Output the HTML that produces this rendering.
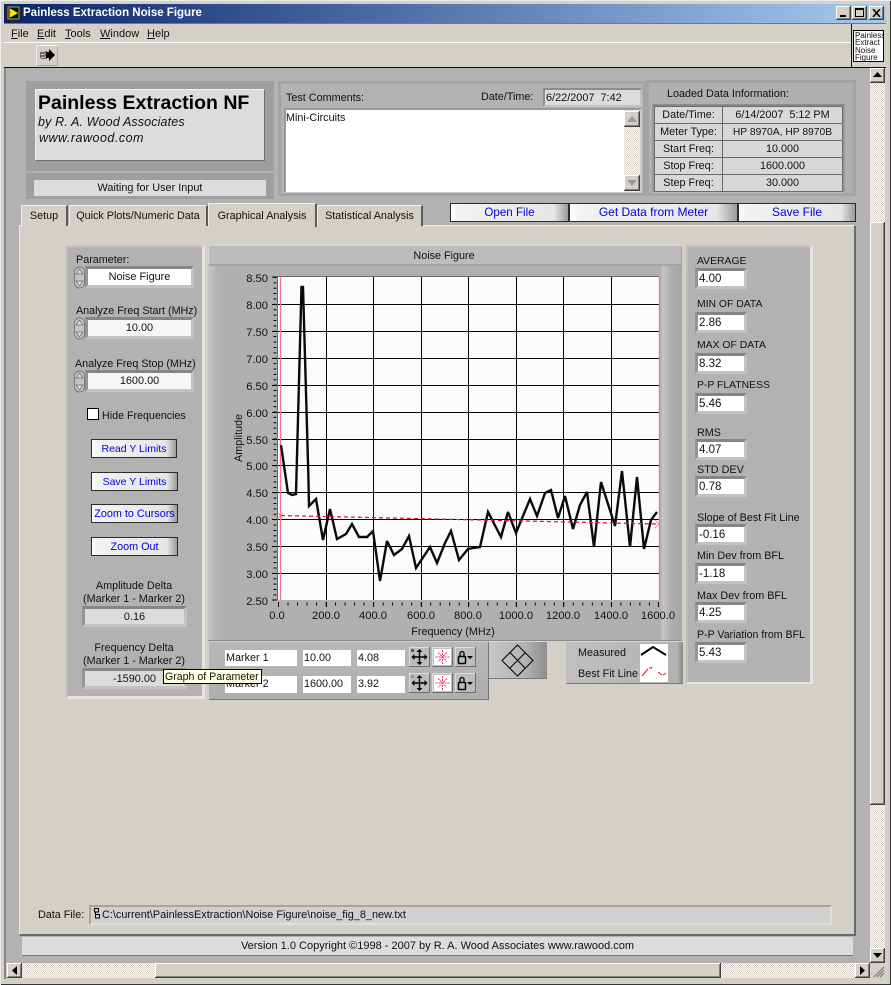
<!DOCTYPE html>
<html><head><meta charset="utf-8"><title>Painless Extraction Noise Figure</title>
<style>
html,body{margin:0;padding:0;width:891px;height:985px;overflow:hidden;background:#d4d0c8}
div,span{position:absolute;box-sizing:border-box}
u{position:static}
body,div{font:11px/14px "Liberation Sans",sans-serif;color:#111}
.t{white-space:nowrap;height:14px;line-height:14px;margin-top:1px}
.c{text-align:center}
.b{background:#d4d0c8;box-shadow:inset -1px -1px #404040,inset 1px 1px #fff,inset -2px -2px #808080}
.d{background:repeating-conic-gradient(#fff 0 25%,#d4d0c8 0 50%) 0 0/2px 2px}
.g{background:#b2b2b2}
.rs{border:3px solid;border-color:#a4a4a4;background:#b2b2b2}
.lo{background:#b2b2b2;border:3px solid;border-color:#e6e3dc;border-top-color:#c8c5bd;border-left-color:#c0bdb5}
.f{border:3px solid;border-color:#858585 #c2c2c2 #c2c2c2 #949494;text-align:center;line-height:11px;background:#fff;background-clip:padding-box}
.fl{text-align:left;padding-left:1px;font-size:11.5px;line-height:16px}
.bb{color:#0000e0;text-align:center;border:1px solid #2c2c2c;background:linear-gradient(90deg,#fff 0,#f2f2f2 6%,#e6e6e6 88%,#9a9a9a 100%);white-space:nowrap}
.tab{background:#d4d0c8;border-top:1px solid #eee;border-left:1px solid #eee;border-right:2px solid #5a5a5a;text-align:center;line-height:20px;white-space:nowrap;font-size:10.8px}
.m{background:#fff;text-align:left;padding-left:1px;line-height:17px;white-space:nowrap;font-size:10.8px}
.mb{background:#bdbdbd;box-shadow:inset -1px -1px #6e6e6e,inset 1px 1px #dedede}
.cell{background:#d8d8d8;border:1px solid #6a6a6a;text-align:center;line-height:17px;white-space:nowrap;font-size:10.8px}
</style></head><body>

<!-- window chrome -->
<div style="left:0;top:0;width:891px;height:985px;background:#d4d0c8;box-shadow:inset 1px 1px #eee,inset -1px -1px #333"></div>
<div style="left:4px;top:4px;width:882px;height:19px;background:linear-gradient(90deg,#0a246a,#a6caf0)"></div>
<div class="t" style="left:23px;top:5px;font-weight:bold;font-size:11.5px;color:#fff">Painless Extraction Noise Figure</div>
<svg style="position:absolute;left:6px;top:5px" width="15" height="16"><rect width="15" height="16" fill="#222"/><rect x="2" y="2" width="11" height="12" fill="#111" stroke="#999"/><path d="M4 4l7 4-7 4z" fill="#ee0" stroke="#ee0"/><path d="M1 7h4" stroke="#e22"/></svg>
<div class="b" style="left:836px;top:6px;width:15px;height:14px"><div style="left:4px;top:9px;width:6px;height:2px;background:#000"></div></div>
<div class="b" style="left:852px;top:6px;width:15px;height:14px"><div style="left:3px;top:2px;width:9px;height:9px;border:1px solid #000;border-top-width:2px"></div></div>
<div class="b" style="left:869px;top:6px;width:15px;height:14px"><svg style="position:absolute;left:3px;top:3px" width="9" height="8"><path d="M1 0l7 8M8 0l-7 8" stroke="#000" stroke-width="1.6"/></svg></div>

<div style="left:4px;top:23px;width:882px;height:1px;background:#777"></div>
<div class="t" style="left:11px;top:26px"><u>F</u>ile</div>
<div class="t" style="left:37px;top:26px"><u>E</u>dit</div>
<div class="t" style="left:65px;top:26px"><u>T</u>ools</div>
<div class="t" style="left:100px;top:26px"><u>W</u>indow</div>
<div class="t" style="left:147px;top:26px"><u>H</u>elp</div>
<div style="left:4px;top:42px;width:847px;height:1px;background:#fff"></div>
<div style="left:36px;top:45px;width:22px;height:21px;background:#d4d0c8;box-shadow:inset 1px 1px #eee,inset -1px -1px #aaa"></div>
<svg style="position:absolute;left:39px;top:48px" width="17" height="15"><path d="M1 5h1M1 7h1M1 9h1M3 4v7M5 4v7M7 3v9" stroke="#000" stroke-dasharray="2 1"/><path d="M7 4h3V1l6 6-6 6v-3H7z" fill="#000"/></svg>
<div style="left:851px;top:24px;width:1px;height:44px;background:#111"></div>
<div style="left:853px;top:30px;width:31px;height:32px;background:#fff;border:1px solid #000;font-size:8px;line-height:7.3px;padding:1px 0 0 1px;white-space:pre;overflow:hidden">Painless
Extract
Noise
Figure</div>
<div style="left:4px;top:67px;width:882px;height:1px;background:#111"></div>

<!-- panel background -->
<div class="g" style="left:6px;top:68px;width:864px;height:895px"></div>
<div style="left:4px;top:68px;width:2px;height:911px;background:#858585"></div>

<!-- vertical scrollbar -->
<div class="d" style="left:870px;top:68px;width:15px;height:895px"></div>
<div class="b" style="left:870px;top:68px;width:15px;height:15px"><svg style="position:absolute;left:3px;top:4px" width="9" height="6"><path d="M4.5 0L9 5H0z" fill="#000"/></svg></div>
<div class="b" style="left:870px;top:222px;width:15px;height:583px"></div>
<div class="b" style="left:870px;top:948px;width:15px;height:15px"><svg style="position:absolute;left:3px;top:5px" width="9" height="6"><path d="M4.5 5L9 0H0z" fill="#000"/></svg></div>
<!-- horizontal scrollbar -->
<div class="d" style="left:7px;top:963px;width:863px;height:15px"></div>
<div class="b" style="left:7px;top:963px;width:15px;height:15px"><svg style="position:absolute;left:5px;top:3px" width="6" height="9"><path d="M0 4.5L5 0V9z" fill="#000"/></svg></div>
<div class="b" style="left:155px;top:963px;width:566px;height:15px"></div>
<div class="b" style="left:855px;top:963px;width:15px;height:15px"><svg style="position:absolute;left:5px;top:3px" width="6" height="9"><path d="M5 4.5L0 0V9z" fill="#000"/></svg></div>
<svg style="position:absolute;left:873px;top:966px" width="12" height="12"><path d="M11 1L1 11M11 4L4 11M11 7L7 11" stroke="#777" stroke-width="1.2"/></svg>

<!-- title block -->
<div class="rs" style="left:26px;top:81px;width:248px;height:90px;border-width:9px 9px 10px 9px;border-color:#9e9e9e"></div>
<div style="left:35px;top:89px;width:230px;height:72px;background:#dcdcdc;border:1px solid;border-color:#f0f0f0 #6e6e6e #6e6e6e #f0f0f0"></div>
<div class="t" style="left:38px;top:91px;height:22px;line-height:22px;font-weight:bold;font-size:19.5px;color:#000">Painless Extraction NF</div>
<div class="t" style="left:38px;top:114px;font-style:italic;font-size:12.5px;letter-spacing:.13px">by R. A. Wood Associates</div>
<div class="t" style="left:39px;top:130px;font-style:italic;font-size:12.5px;letter-spacing:.5px">www.rawood.com</div>
<div class="rs" style="left:26px;top:173px;width:248px;height:26px;border-width:7px 8px 3px 8px;border-color:#9e9e9e"></div>
<div style="left:34px;top:180px;width:232px;height:16px;background:#dcdcdc"></div>
<div class="t c" style="left:34px;top:180px;width:232px;font-size:10.9px">Waiting for User Input</div>

<!-- comments -->
<div class="rs" style="left:278px;top:81px;width:368px;height:115px"></div>
<div class="t" style="left:286px;top:90px;font-size:10.8px">Test Comments:</div>
<div class="t" style="left:481px;top:89px;font-size:10.8px">Date/Time:</div>
<div style="left:543px;top:88px;width:99px;height:19px;background:#dcdcdc;border:2px solid;border-color:#8c8c8c #c2c2c2 #c2c2c2 #8c8c8c;line-height:17px;padding-left:1px;font-size:10.9px;white-space:pre">6/22/2007  7:42</div>
<div style="left:284px;top:108px;width:358px;height:85px;border:2px solid;border-color:#9a9a9a #ccc #ccc #9a9a9a"></div>
<div style="left:286px;top:110px;width:354px;height:82px;background:#fff"></div>
<div class="t" style="left:286px;top:110px;font-size:10.8px">Mini-Circuits</div>
<div class="d" style="left:624px;top:110px;width:16px;height:82px"></div>
<div class="b" style="left:624px;top:111px;width:16px;height:16px"><svg style="position:absolute;left:3px;top:5px" width="10" height="6"><path d="M5 0l5 6H0z" fill="#999"/></svg></div>
<div class="b" style="left:624px;top:175px;width:16px;height:16px"><svg style="position:absolute;left:3px;top:5px" width="10" height="6"><path d="M5 6l5-6H0z" fill="#999"/></svg></div>

<!-- loaded data -->
<div style="left:646px;top:80px;width:210px;height:116px;background:#b0b0b0;border:3px solid #a4a4a4"></div>
<div class="t" style="left:667px;top:86px;font-size:10.8px">Loaded Data Information:</div>
<div style="left:652px;top:104px;width:193px;height:89px;border:2px solid;border-color:#8a8a8a #9a9a9a #bebebe #9a9a9a"></div>
<div class="cell" style="left:654px;top:106px;width:69px;height:18px">Date/Time:</div>
<div class="cell" style="left:722px;top:106px;width:121px;height:18px;white-space:pre">6/14/2007  5:12 PM</div>
<div class="cell" style="left:654px;top:123px;width:69px;height:18px">Meter Type:</div>
<div class="cell" style="left:722px;top:123px;width:121px;height:18px;font-size:10.3px">HP 8970A, HP 8970B</div>
<div class="cell" style="left:654px;top:140px;width:69px;height:18px">Start Freq:</div>
<div class="cell" style="left:722px;top:140px;width:121px;height:18px">10.000</div>
<div class="cell" style="left:654px;top:157px;width:69px;height:18px">Stop Freq:</div>
<div class="cell" style="left:722px;top:157px;width:121px;height:18px">1600.000</div>
<div class="cell" style="left:654px;top:174px;width:69px;height:18px">Step Freq:</div>
<div class="cell" style="left:722px;top:174px;width:121px;height:18px">30.000</div>

<!-- tab panel -->
<div style="left:19px;top:225px;width:837px;height:711px;background:#d4d0c8;border-top:1px solid #eeeae2;border-left:1px solid #eeeae2;border-right:2px solid #6a6a6a;border-bottom:2px solid #6a6a6a"></div>
<div class="tab" style="left:21px;top:205px;width:47px;height:21px">Setup</div>
<div class="tab" style="left:69px;top:205px;width:139px;height:21px">Quick Plots/Numeric Data</div>
<div class="tab" style="left:317px;top:205px;width:106px;height:21px">Statistical Analysis</div>
<div class="tab" style="left:208px;top:203px;width:109px;height:24px;line-height:24px">Graphical Analysis</div>

<div class="bb" style="left:450px;top:203px;width:119px;height:19px;line-height:17px;font-size:11.6px">Open File</div>
<div class="bb" style="left:569px;top:203px;width:169px;height:19px;line-height:17px;font-size:12px">Get Data from Meter</div>
<div class="bb" style="left:738px;top:203px;width:118px;height:19px;line-height:17px;font-size:12px">Save File</div>

<!-- left control panel -->
<div class="lo" style="left:66px;top:245px;width:139px;height:454px;border-width:2px 3px 3px 2px"></div>
<div class="t" style="left:76px;top:252px;font-size:10.8px">Parameter:</div>
<div class="t" style="left:76px;top:303px;font-size:10.75px">Analyze Freq Start (MHz)</div>
<div class="t" style="left:75px;top:356px;font-size:10.75px">Analyze Freq Stop (MHz)</div>
<div class="f" style="left:85px;top:266px;width:109px;height:22px;line-height:17px;font-size:10.9px">Noise Figure</div>
<div class="f" style="left:85px;top:317px;width:109px;height:22px;line-height:17px;background-color:#f6f6f6;font-size:10.9px">10.00</div>
<div class="f" style="left:85px;top:370px;width:109px;height:22px;line-height:17px;background-color:#f6f6f6;font-size:10.9px">1600.00</div>
<svg style="position:absolute;left:74px;top:266px" width="12" height="128"><g fill="#c4c4c4" stroke="#777"><rect x=".5" y="1" width="10" height="21" rx="5"/><rect x=".5" y="52" width="10" height="21" rx="5"/><rect x=".5" y="105" width="10" height="21" rx="5"/></g><path d="M2 8l3.500-5 3.500 5zM2 15l3.500 5 3.500-5zM2 59l3.500-5 3.500 5zM2 66l3.500 5 3.500-5zM2 112l3.500-5 3.500 5zM2 119l3.500 5 3.500-5z" fill="#dcdcdc" stroke="#666" stroke-width=".7"/></svg>
<div style="left:87px;top:408px;width:12px;height:12px;background:#fff;border:1px solid #000"></div>
<div class="t" style="left:102px;top:408px;font-size:10.7px">Hide Frequencies</div>
<div class="bb" style="left:91px;top:439px;width:86px;height:19px;line-height:18px;font-size:10.5px">Read Y Limits</div>
<div class="bb" style="left:91px;top:472px;width:87px;height:19px;line-height:18px;font-size:10.5px">Save Y Limits</div>
<div class="bb" style="left:91px;top:504px;width:87px;height:19px;line-height:18px;font-size:10.8px">Zoom to Cursors</div>
<div class="bb" style="left:91px;top:537px;width:87px;height:19px;line-height:18px;font-size:10.8px">Zoom Out</div>
<div class="t c" style="left:66px;top:578px;width:136px;font-size:10.8px">Amplitude Delta</div>
<div class="t c" style="left:66px;top:591px;width:136px;font-size:10.8px">(Marker 1 - Marker 2)</div>
<div class="f" style="left:82px;top:606px;width:105px;height:21px;line-height:16px;background-color:#dcdcdc;font-size:10.9px">0.16</div>
<div class="t c" style="left:66px;top:640px;width:136px;font-size:10.8px">Frequency Delta</div>
<div class="t c" style="left:66px;top:653px;width:136px;font-size:10.8px">(Marker 1 - Marker 2)</div>
<div class="f" style="left:82px;top:668px;width:105px;height:21px;line-height:16px;background-color:#dcdcdc;font-size:10.9px">-1590.00</div>

<!-- graph -->
<div style="left:208px;top:245px;width:474px;height:20px;background:#bcbcbc;box-shadow:inset 1px 1px #d8d8d8,inset -1px -1px #a0a0a0"></div>
<div class="t c" style="left:208px;top:248px;width:472px;font-size:10.8px">Noise Figure</div>
<div style="left:208px;top:265px;width:474px;height:376px;background:linear-gradient(90deg,#c8c8c8 0,#b0b0b0 10px,#b0b0b0 452px,#c6c6c6 455px,#b0b0b0 462px,#a6a6a6 474px);border-bottom:1px solid #8a8a8a"></div>
<div style="left:208px;top:265px;width:474px;height:1px;background:#a8a8a8"></div>
<svg style="position:absolute;left:0;top:0" width="891" height="985">
<rect x="278" y="277" width="381" height="323" fill="#fbfbfb"/>
<path d="M277.500 277V600M277 276.500H659" stroke="#6a6a6a"/>
<path d="M326.500 277V600M373.500 277V600M421.500 277V600M468.500 277V600M516.500 277V600M563.500 277V600M611.500 277V600M278 304.500H659M278 331.500H659M278 358.500H659M278 385.500H659M278 412.500H659M278 439.500H659M278 465.500H659M278 492.500H659M278 519.500H659M278 546.500H659M278 573.500H659" stroke="#000" stroke-width="1" fill="none"/>
<path d="M272 277H277M272 304.500H277M272 331.500H277M272 358.500H277M272 385.500H277M272 412.500H277M272 439.500H277M272 465.500H277M272 492.500H277M272 519.500H277M272 546.500H277M272 573.500H277M272 600H277" stroke="#000"/>
<line x1="275" y1="277" x2="275" y2="600" stroke="#000" stroke-width="3" stroke-dasharray="1 4.380"/>
<path d="M278.500 602V607M326.500 602V607M373.500 602V607M421.500 602V607M468.500 602V607M516.500 602V607M563.500 602V607M611.500 602V607M658.500 602V607" stroke="#000"/>
<line x1="278" y1="604" x2="659" y2="604" stroke="#000" stroke-width="3" stroke-dasharray="1 8.510"/>
<path d="M280.500 277V600" stroke="#ff6f8f" stroke-width="1.300"/>
<path d="M659.500 277V600" stroke="#ff6f8f" stroke-width="1.300"/>
<path d="M281 515.500L657 524" stroke="#3a9a50" stroke-width="1" stroke-dasharray="2 5"/>
<polyline fill="none" stroke="#0a0a0a" stroke-width="2.400" stroke-linejoin="miter" stroke-miterlimit="3" points="281,445 288,493 292,495 296,494 301.500,287 303,287 308.300,473 309,506 316,499 323,540 330,509 337,539 346,534 352,524 359,537 367,537 373,531 380,581 387,541 394,555 402,549 409,536 416,568 430,547 437,563 445,543 451,531 459,560 468,549 473,548 480,547 488,512 501,537 508,512 516,533 530,499 537,516 545,493 551,490 558,518 565,496 573,529 580,505 587,492 594,547 601,482 615,526 622,471 630,547 637,477 644,549 651,520 657,512"/>
<path d="M281 515.500L657 524" stroke="#ee1133" stroke-width="1.200" stroke-dasharray="4 3" fill="none"/>
<g stroke="#ff6f8f" stroke-width=".8"><path d="M278 513l5 5M283 513l-5 5M655 520l4 4-4 4"  fill="none"/></g>
<g font-family="Liberation Sans,sans-serif" font-size="11.200" fill="#111" text-anchor="end">
<text x="268" y="282">8.50</text><text x="268" y="309">8.00</text><text x="268" y="336">7.50</text><text x="268" y="363">7.00</text><text x="268" y="390">6.50</text><text x="268" y="417">6.00</text><text x="268" y="444">5.50</text><text x="268" y="470">5.00</text><text x="268" y="497">4.50</text><text x="268" y="524">4.00</text><text x="268" y="551">3.50</text><text x="268" y="578">3.00</text><text x="268" y="605">2.50</text>
</g>
<g font-family="Liberation Sans,sans-serif" font-size="11.200" fill="#111" text-anchor="middle">
<text x="277" y="619">0.0</text><text x="326" y="619">200.0</text><text x="373" y="619">400.0</text><text x="421" y="619">600.0</text><text x="468" y="619">800.0</text><text x="516" y="619">1000.0</text><text x="563" y="619">1200.0</text><text x="611" y="619">1400.0</text><text x="658" y="619">1600.0</text>
<text x="453" y="635" font-size="10.800">Frequency (MHz)</text>
<text transform="translate(242,438) rotate(-90)" font-size="10.800">Amplitude</text>
</g>
</svg>

<!-- marker panel -->
<div style="left:208px;top:641px;width:281px;height:59px;background:linear-gradient(#b8b8b8,#aeaeae);box-shadow:inset 1px 1px #d0d0d0,inset -1px -1px #777"></div>
<div class="m" style="left:225px;top:650px;width:72px;height:16px">Marker 1</div>
<div class="m" style="left:303px;top:650px;width:48px;height:16px">10.00</div>
<div class="m" style="left:357px;top:650px;width:48px;height:16px">4.08</div>
<div class="m" style="left:225px;top:676px;width:72px;height:17px">Marker 2</div>
<div class="m" style="left:303px;top:676px;width:48px;height:17px">1600.00</div>
<div class="m" style="left:357px;top:676px;width:48px;height:17px">3.92</div>
<div class="mb" style="left:409px;top:647px;width:21px;height:20px"></div>
<div class="mb" style="left:432px;top:647px;width:21px;height:20px"></div>
<div class="mb" style="left:455px;top:647px;width:21px;height:20px"></div>
<div class="mb" style="left:409px;top:673px;width:21px;height:20px"></div>
<div class="mb" style="left:432px;top:673px;width:21px;height:20px"></div>
<div class="mb" style="left:455px;top:673px;width:21px;height:20px"></div>
<div style="left:434px;top:649px;width:17px;height:16px;background:#fff"></div>
<div style="left:434px;top:675px;width:17px;height:16px;background:#fff"></div>
<svg style="position:absolute;left:0;top:0" width="891" height="985">
<g>
<rect x="411" y="649" width="3" height="3" fill="#3c6a3c"/>
<path d="M419.500 650V664M412.500 657H426.500" stroke="#000" stroke-width="1.400"/><path d="M419.500 649l-3 3h6zM419.500 665l-3-3h6zM411.500 657l3-3v6zM427.500 657l-3-3v6z" fill="#000"/>
<path d="M442.500 650V664M435.500 657H449.500M438 652.500l9 9M447 652.500l-9 9" stroke="#ff2a5e" stroke-width="1" stroke-dasharray="2 1"/>
<rect x="458.500" y="656.500" width="7" height="7" rx="1" fill="none" stroke="#000" stroke-width="1.500"/><path d="M460 656v-2.500a2 2 0 0 1 4 0V656" fill="none" stroke="#000" stroke-width="1.300"/><path d="M467 656h6l-3 3z" fill="#000"/>
</g>
<g>
<rect x="411" y="675" width="3" height="3" fill="#55cc44"/>
<path d="M419.500 676V690M412.500 683H426.500" stroke="#000" stroke-width="1.400"/><path d="M419.500 675l-3 3h6zM419.500 691l-3-3h6zM411.500 683l3-3v6zM427.500 683l-3-3v6z" fill="#000"/>
<path d="M442.500 676V690M435.500 683H449.500M438 678.500l9 9M447 678.500l-9 9" stroke="#ff2a5e" stroke-width="1" stroke-dasharray="2 1"/>
<rect x="458.500" y="682.500" width="7" height="7" rx="1" fill="none" stroke="#000" stroke-width="1.500"/><path d="M460 682v-2.500a2 2 0 0 1 4 0V682" fill="none" stroke="#000" stroke-width="1.300"/><path d="M467 682h6l-3 3z" fill="#000"/>
</g>
</svg>

<!-- diamond button -->
<div style="left:489px;top:641px;width:58px;height:38px;background:linear-gradient(90deg,#c6c6c6,#b4b4b4 60%,#8e8e8e);box-shadow:inset 0 1px #d8d8d8,inset 0 -1px #777"></div>
<svg style="position:absolute;left:500px;top:643px" width="36" height="36"><path d="M17.500 2L33 17.500 17.500 33 2 17.500zM10 9.500L25 25M25 10L10 25" fill="none" stroke="#000" stroke-width="1"/></svg>

<!-- legend -->
<div style="left:565px;top:641px;width:118px;height:43px;background:linear-gradient(90deg,#c0c0c0,#b2b2b2 95%,#888);box-shadow:inset 1px 1px #d8d8d8,inset 0 -1px #777"></div>
<div class="t" style="left:578px;top:645px;font-size:10.8px">Measured</div>
<div class="t" style="left:578px;top:666px;font-size:10.8px">Best Fit Line</div>
<div style="left:640px;top:644px;width:28px;height:38px;background:#fff"></div>
<svg style="position:absolute;left:640px;top:644px" width="28" height="38"><path d="M1 11L13 3 26 11" fill="none" stroke="#000" stroke-width="2"/><path d="M2 32L8 25M9 24h3M12 24l-1-1M18 28l4 3M23 31l3-2" stroke="#ee1133" fill="none"/></svg>

<!-- right stats -->
<div class="lo" style="left:686px;top:245px;width:127px;height:439px;border-width:2px 3px 2px 2px"></div>
<div class="t" style="left:697px;top:254px;font-size:10.4px">AVERAGE</div>
<div class="t" style="left:697px;top:297px;font-size:10.4px">MIN OF DATA</div>
<div class="t" style="left:697px;top:338px;font-size:10.4px">MAX OF DATA</div>
<div class="t" style="left:697px;top:378px;font-size:10.4px">P-P FLATNESS</div>
<div class="t" style="left:697px;top:425px;font-size:10.8px">RMS</div>
<div class="t" style="left:697px;top:462px;font-size:10.8px">STD DEV</div>
<div class="t" style="left:697px;top:510px;font-size:10.8px">Slope of Best Fit Line</div>
<div class="t" style="left:697px;top:548px;font-size:10.8px">Min Dev from BFL</div>
<div class="t" style="left:697px;top:588px;font-size:10.8px">Max Dev from BFL</div>
<div class="t" style="left:697px;top:627px;font-size:10.6px">P-P Variation from BFL</div>
<div class="f fl" style="left:695px;top:268px;width:52px;height:21px">4.00</div>
<div class="f fl" style="left:695px;top:312px;width:52px;height:21px">2.86</div>
<div class="f fl" style="left:695px;top:353px;width:52px;height:21px">8.32</div>
<div class="f fl" style="left:695px;top:393px;width:52px;height:21px">5.46</div>
<div class="f fl" style="left:695px;top:439px;width:52px;height:21px">4.07</div>
<div class="f fl" style="left:695px;top:476px;width:52px;height:21px">0.78</div>
<div class="f fl" style="left:695px;top:524px;width:52px;height:21px">-0.16</div>
<div class="f fl" style="left:695px;top:563px;width:52px;height:21px">-1.18</div>
<div class="f fl" style="left:695px;top:602px;width:52px;height:21px">4.25</div>
<div class="f fl" style="left:695px;top:642px;width:52px;height:21px">5.43</div>

<!-- tooltip -->
<div style="left:163px;top:669px;width:99px;height:15px;background:#ffffe1;border:1px solid #000;line-height:14px;padding-left:1px;white-space:nowrap;font-size:10.6px">Graph of Parameter</div>

<!-- data file -->
<div class="t" style="left:38px;top:907px;font-size:10.8px">Data File:</div>
<div style="left:89px;top:905px;width:743px;height:20px;background:#d0d0d0;border:2px solid;border-color:#a8a49c #e2dfd8 #e2dfd8 #a8a49c;line-height:17px;padding-left:11px;font-size:10.9px;white-space:nowrap">C:\current\PainlessExtraction\Noise Figure\noise_fig_8_new.txt</div>
<svg style="position:absolute;left:94px;top:908px" width="6" height="11"><path d="M.5.500h4v3.500h-4zM1.500 4v2.500M1.500 6.500h4v3.500h-4z" fill="none" stroke="#000"/></svg>

<!-- version bar -->
<div style="left:22px;top:937px;width:831px;height:19px;background:#dcdcdc;border-bottom:1px solid #777"></div>
<div class="t c" style="left:22px;top:938px;width:831px;font-size:11px">Version 1.0 Copyright ©1998 - 2007 by R. A. Wood Associates www.rawood.com</div>
</body></html>
